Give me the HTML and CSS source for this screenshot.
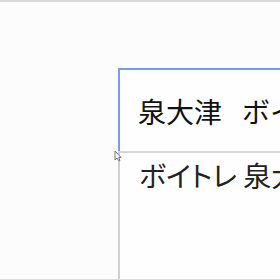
FILE: index.html
```html
<!DOCTYPE html>
<html lang="ja">
<head>
    <meta charset="UTF-8">
    <meta name="viewport" content="width=device-width, initial-scale=1.0">
    <title>検索</title>
    <link rel="stylesheet" href="styles.css">
</head>
<body>
    <div class="top-bar"></div>

    <div class="search-box">
        <div class="search-input">泉大津<span class="gap"></span>ボイトレ</div>
        <div class="suggestions">
            <div class="suggestion">ボイトレ 泉大津</div>
        </div>
        <svg class="cursor" width="8" height="12" viewBox="0 0 8 12">
            <path d="M1 1 L1 10 L3 8 L5 11 L6 10.5 L4.5 7.5 L7 7.5 Z" fill="#fff" stroke="#777" stroke-width="1"/>
        </svg>
    </div>

    <div class="bottom-bar"></div>
</body>
</html>
```

FILE: styles.css
```css
html, body {
    margin: 0;
    height: 100%;
    overflow: hidden;
}
body {
    background-color: #fcfcfc;
    font-family: "Noto Sans CJK JP", "Noto Sans", sans-serif;
    display: flex;
    flex-direction: column;
}
.top-bar {
    height: 2px;
    background-color: #dadada;
}
.search-box {
    position: relative;
    flex: 1;
    display: flex;
    flex-direction: column;
    margin: 66px 0 0 118px;
    width: 420px;
}
.search-input {
    height: 81px;
    border: 2px solid #6f9ef4;
    border-bottom: none;
    background-color: #fefefe;
    display: flex;
    align-items: center;
    padding-left: 18px;
    font-size: 28px;
    color: #111;
    white-space: nowrap;
}
.gap {
    display: inline-block;
    width: 20px;
}
.suggestions {
    flex: 1;
    border-top: 2px solid #d6d6d6;
    border-left: 2px solid #d0d0d0;
    background-color: #fefefe;
}
.suggestion {
    padding: 2px 0 0 19px;
    font-size: 28px;
    color: #222;
    font-feature-settings: "palt";
    white-space: nowrap;
}
.cursor {
    position: absolute;
    left: -4px;
    top: 82px;
}
.bottom-bar {
    height: 1px;
    background-color: #dcdcdc;
}
```
